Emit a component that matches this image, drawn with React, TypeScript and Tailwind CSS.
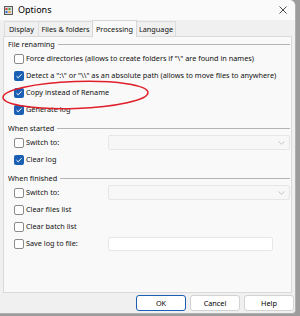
import React from "react";

const font = { fontFamily: '"Noto Sans", "Open Sans", Arial, sans-serif' };

function Check({ on }: { on?: boolean }) {
  if (on) {
    return (
      <span className="w-[10px] h-[10px] rounded-[2px] bg-[#1a5fb4] flex items-center justify-center shrink-0">
        <svg width="8" height="8" viewBox="0 0 8 8">
          <path d="M1.5 4.2 L3.2 5.8 L6.6 2.2" fill="none" stroke="#fff" strokeWidth="1" />
        </svg>
      </span>
    );
  }
  return <span className="w-[10px] h-[10px] rounded-[2px] bg-white border border-[#8a8a8a] shrink-0" />;
}

function Heading({ text }: { text: string }) {
  return (
    <div className="h-[12px] flex items-center gap-[3px]">
      <span>{text}</span>
      <span className="flex-1 h-px bg-[#b4b4b4]" />
    </div>
  );
}

function Row({ on, label, children }: { on?: boolean; label: string; children?: React.ReactNode }) {
  return (
    <div className="h-[17px] flex items-center pl-[6px]">
      <div className="w-[94px] flex items-center gap-[2px] shrink-0 whitespace-nowrap">
        <Check on={on} />
        <span>{label}</span>
      </div>
      {children}
    </div>
  );
}

function LongRow({ on, label }: { on?: boolean; label: string }) {
  return (
    <div className="h-[17px] flex items-center gap-[2px] pl-[6px] whitespace-nowrap">
      <Check on={on} />
      <span>{label}</span>
    </div>
  );
}

function Dropdown() {
  return (
    <div className="w-[182px] h-[15px] bg-[#f7f7f7] border border-[#e6e6e6] rounded-[2px] flex items-center justify-end pr-[4px]">
      <svg width="7" height="4" viewBox="0 0 7 4">
        <path d="M0.5 0.5 L3.5 3.3 L6.5 0.5" fill="none" stroke="#c4c4c4" strokeWidth="1" />
      </svg>
    </div>
  );
}

export default function App() {
  return (
    <div className="w-[300px] h-[316px] bg-[#9c9c9c] relative overflow-hidden text-[7.3px] text-[#111]" style={font}>
      <div className="w-[296px] h-[314px] bg-[#f0f0f0] rounded-tr-[6px] rounded-br-[4px] border-r border-b border-[#b0b0b0] flex flex-col">
        {/* title bar */}
        <div className="h-[20px] bg-[#fafafa] flex items-center pl-[4px] pr-[8px] rounded-tr-[6px]">
          <svg width="9" height="9" viewBox="0 0 9 9">
            <rect x="0" y="0" width="9" height="9" fill="#5a5a5a" />
            <rect x="1" y="1" width="7" height="7" fill="#dcdcdc" />
            <rect x="1.5" y="2" width="2" height="2" fill="#d23a3a" />
            <rect x="4.5" y="2" width="2" height="2" fill="#3aa14a" />
            <rect x="1.5" y="5" width="2" height="2" fill="#2e6fd1" />
            <rect x="4.5" y="5" width="2" height="2" fill="#e0a020" />
          </svg>
          <span className="ml-[5px] text-[9px] text-black">Options</span>
          <svg className="ml-auto" width="8" height="8" viewBox="0 0 8 8">
            <path d="M0.5 0.5 L7.5 7.5 M7.5 0.5 L0.5 7.5" stroke="#333" strokeWidth="0.9" />
          </svg>
        </div>
        {/* tabs */}
        <div className="h-[16px] flex items-end pl-[4px]">
          <div className="w-[34px] h-[15px] flex items-center justify-center border-t border-l border-[#dcdcdc] bg-[#f0f0f0]">Display</div>
          <div className="w-[54px] h-[15px] flex items-center justify-center border-t border-l border-[#dcdcdc] bg-[#f0f0f0]">Files &amp; folders</div>
          <div className="w-[45px] h-[17px] flex items-center justify-center border-t border-l border-r border-[#d6d6d6] bg-[#f9f9f9] relative top-[1px] z-10">Processing</div>
          <div className="w-[39px] h-[15px] flex items-center justify-center border-t border-r border-[#dcdcdc] bg-[#f0f0f0]">Language</div>
        </div>
        {/* panel */}
        <div className="h-[257px] mx-[3px] bg-[#f9f9f9] border border-[#dadada] pt-[1px] pl-[4px] pr-[1px]">
          <Heading text="File renaming" />
          <LongRow label={'Force directories (allows to create folders if "\\" are found in names)'} />
          <LongRow on label={'Detect a ":\\" or "\\\\" as an absolute path (allows to move files to anywhere)'} />
          <LongRow on label="Copy instead of Rename" />
          <LongRow on label="Generate log" />
          <div className="h-[4px]" />
          <Heading text="When started" />
          <Row label="Switch to:">
            <Dropdown />
          </Row>
          <Row on label="Clear log" />
          <div className="h-[4px]" />
          <Heading text="When finished" />
          <Row label="Switch to:">
            <Dropdown />
          </Row>
          <Row label="Clear files list" />
          <Row label="Clear batch list" />
          <Row label="Save log to file:">
            <div className="w-[165px] h-[14px] bg-white border border-[#e6e6e6] rounded-[2px]" />
          </Row>
        </div>
        {/* buttons */}
        <div className="flex-1 flex items-center justify-end gap-[4px] pr-[1px]">
          <button className="w-[50px] h-[16px] bg-white border border-[#1a5fb4] rounded-[3px] text-[7.3px] text-black">OK</button>
          <button className="w-[50px] h-[16px] bg-white border border-[#d2d2d2] rounded-[3px] text-[7.3px] text-black">Cancel</button>
          <button className="w-[50px] h-[16px] bg-white border border-[#d2d2d2] rounded-[3px] text-[7.3px] text-black">Help</button>
        </div>
      </div>
      {/* red annotation ellipse */}
      <svg className="absolute left-0 top-0 pointer-events-none" width="300" height="316" viewBox="0 0 300 316">
        <ellipse cx="75.5" cy="95" rx="72.5" ry="13.5" fill="none" stroke="#e0202a" strokeWidth="1.6" transform="rotate(-2 75.5 95)" />
      </svg>
    </div>
  );
}
